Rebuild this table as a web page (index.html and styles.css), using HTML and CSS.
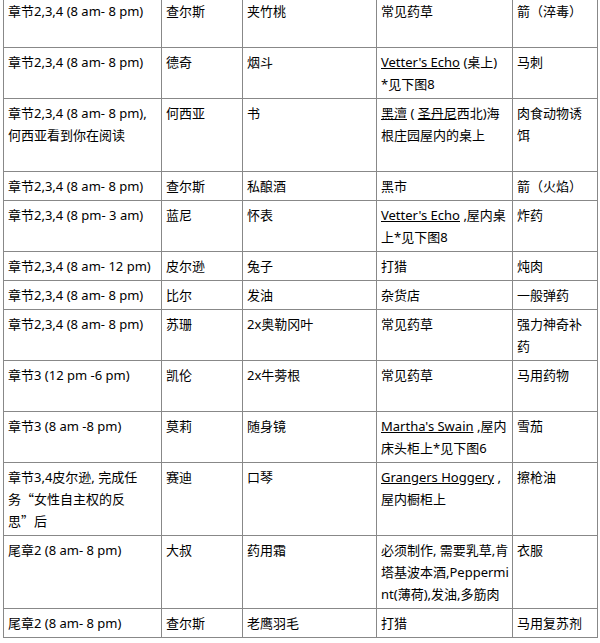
FILE: index.html
```html
<!DOCTYPE html>
<html lang="zh-CN">
<head>
<meta charset="utf-8">
<title>物品表</title>
<link rel="stylesheet" href="styles.css">
</head>
<body>
<div class="wrap">
<table class="grid">
<colgroup>
<col class="c1"><col class="c2"><col class="c3"><col class="c4"><col class="c5">
</colgroup>
<tbody>
<tr class="h2"><td>章节2,3,4 (8 am- 8 pm)</td><td>查尔斯</td><td>夹竹桃</td><td>常见药草</td><td>箭（淬毒）</td></tr>
<tr><td>章节2,3,4 (8 am- 8 pm)</td><td>德奇</td><td>烟斗</td><td><a href="#">Vetter's Echo</a> (桌上)<br>*见下图8</td><td>马刺</td></tr>
<tr class="h3"><td>章节2,3,4 (8 am- 8 pm),<br>何西亚看到你在阅读</td><td>何西亚</td><td>书</td><td><a href="#">黑澶</a> ( <a href="#">圣丹尼</a>西北)海<br>根庄园屋内的桌上</td><td>肉食动物诱<br>饵</td></tr>
<tr><td>章节2,3,4 (8 am- 8 pm)</td><td>查尔斯</td><td>私酿酒</td><td>黑市</td><td>箭（火焰）</td></tr>
<tr><td>章节2,3,4 (8 pm- 3 am)</td><td>蓝尼</td><td>怀表</td><td><a href="#">Vetter's Echo</a> ,屋内桌<br>上*见下图8</td><td>炸药</td></tr>
<tr><td>章节2,3,4 (8 am- 12 pm)</td><td>皮尔逊</td><td>兔子</td><td>打猎</td><td>炖肉</td></tr>
<tr><td>章节2,3,4 (8 am- 8 pm)</td><td>比尔</td><td>发油</td><td>杂货店</td><td>一般弹药</td></tr>
<tr><td>章节2,3,4 (8 am- 8 pm)</td><td>苏珊</td><td>2x奥勒冈叶</td><td>常见药草</td><td>强力神奇补<br>药</td></tr>
<tr class="h2"><td>章节3 (12 pm -6 pm)</td><td>凯伦</td><td>2x牛蒡根</td><td>常见药草</td><td>马用药物</td></tr>
<tr><td>章节3 (8 am -8 pm)</td><td>莫莉</td><td>随身镜</td><td><a href="#">Martha's Swain</a> ,屋内<br>床头柜上*见下图6</td><td>雪茄</td></tr>
<tr><td>章节3,4皮尔逊, 完成任<br>务<span class="q">“</span>女性自主权的反<br>思<span class="q">”</span>后</td><td>赛迪</td><td>口琴</td><td><a href="#">Grangers Hoggery</a> ,<br>屋内橱柜上</td><td>擦枪油</td></tr>
<tr><td>尾章2 (8 am- 8 pm)</td><td>大叔</td><td>药用霜</td><td>必须制作, 需要乳草,肯<br>塔基波本酒,Peppermi<br>nt(薄荷),发油,多筋肉</td><td>衣服</td></tr>
<tr><td>尾章2 (8 am- 8 pm)</td><td>查尔斯</td><td>老鹰羽毛</td><td>打猎</td><td>马用复苏剂</td></tr>
</tbody>
</table>
</div>
</body>
</html>
```
FILE: styles.css
```css
html, body {
  margin: 0;
  padding: 0;
  background: #ffffff;
}
.wrap {
  padding-left: 3px;
  margin-top: -4px;
}
.grid {
  border-collapse: collapse;
  table-layout: fixed;
  width: 594px;
  font-family: "Noto Sans", "Noto Sans CJK SC", sans-serif;
  font-size: 13px;
  line-height: 22px;
  color: #000000;
}
.c1 { width: 158px; }
.c2 { width: 81px; }
.c3 { width: 134px; }
.c4 { width: 136px; }
.c5 { width: 85px; }
.grid td {
  border: 1px solid #888888;
  padding: 3px 2px 3px 4px;
  vertical-align: top;
  text-align: left;
  white-space: nowrap;
}
.grid a {
  color: #000000;
  text-decoration: underline;
}
.grid .q {
  font-family: "Noto Sans CJK SC", sans-serif;
}
.h2 { height: 51px; }
.h3 { height: 73px; }
```
